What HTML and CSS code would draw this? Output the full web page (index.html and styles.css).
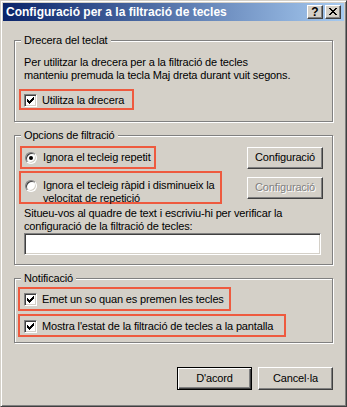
FILE: index.html
```html
<!DOCTYPE html>
<html lang="ca">
<head>
<meta charset="utf-8">
<title>Configuració per a la filtració de tecles</title>
<link rel="stylesheet" href="styles.css">
</head>
<body>
<div class="window">
  <div class="titlebar">
    <span class="title">Configuració per a la filtració de tecles</span>
    <div class="tbtns">
      <span class="tbtn help">?</span>
      <span class="tbtn close">
        <svg width="8" height="7" viewBox="0 0 8 7" shape-rendering="crispEdges">
          <rect x="0" y="0" width="2" height="1"/><rect x="6" y="0" width="2" height="1"/>
          <rect x="1" y="1" width="2" height="1"/><rect x="5" y="1" width="2" height="1"/>
          <rect x="2" y="2" width="4" height="1"/>
          <rect x="3" y="3" width="2" height="1"/>
          <rect x="2" y="4" width="4" height="1"/>
          <rect x="1" y="5" width="2" height="1"/><rect x="5" y="5" width="2" height="1"/>
          <rect x="0" y="6" width="2" height="1"/><rect x="6" y="6" width="2" height="1"/>
        </svg>
      </span>
    </div>
  </div>
  <div class="client">
    <div class="group g1">
      <span class="legend">Drecera del teclat</span>
      <p class="desc">Per utilitzar la drecera per a la filtració de tecles<br>manteniu premuda la tecla Maj dreta durant vuit segons.</p>
      <div class="mark m1">
        <span class="cb"><svg width="7" height="7" viewBox="0 0 7 7" shape-rendering="crispEdges"><rect x="6" y="0" width="1" height="1"/><rect x="5" y="1" width="2" height="1"/><rect x="0" y="2" width="1" height="1"/><rect x="4" y="2" width="3" height="1"/><rect x="0" y="3" width="2" height="1"/><rect x="3" y="3" width="3" height="1"/><rect x="0" y="4" width="5" height="1"/><rect x="1" y="5" width="3" height="1"/><rect x="2" y="6" width="1" height="1"/></svg></span>
        <span class="lbl">Utilitza la drecera</span>
      </div>
    </div>

    <div class="group g2">
      <span class="legend">Opcions de filtració</span>
      <div class="opts">
        <div class="mark rB">
          <span class="rd"><span class="dot"></span></span>
          <span class="lbl">Ignora el tecleig repetit</span>
        </div>
        <button class="btn cfg" type="button">Configuració</button>
        <div class="mark rC">
          <span class="rd"></span>
          <span class="lbl">Ignora el tecleig ràpid i disminueix la<br>velocitat de repetició</span>
        </div>
        <button class="btn cfg disabled" type="button">Configuració</button>
      </div>
      <p class="note">Situeu-vos al quadre de text i escriviu-hi per verificar la<br>configuració de la filtració de tecles:</p>
      <input class="field" type="text" aria-label="Prova">
    </div>

    <div class="group g3">
      <span class="legend">Notificació</span>
      <div class="mark rD">
        <span class="cb"><svg width="7" height="7" viewBox="0 0 7 7" shape-rendering="crispEdges"><rect x="6" y="0" width="1" height="1"/><rect x="5" y="1" width="2" height="1"/><rect x="0" y="2" width="1" height="1"/><rect x="4" y="2" width="3" height="1"/><rect x="0" y="3" width="2" height="1"/><rect x="3" y="3" width="3" height="1"/><rect x="0" y="4" width="5" height="1"/><rect x="1" y="5" width="3" height="1"/><rect x="2" y="6" width="1" height="1"/></svg></span>
        <span class="lbl">Emet un so quan es premen les tecles</span>
      </div>
      <div class="mark rE">
        <span class="cb"><svg width="7" height="7" viewBox="0 0 7 7" shape-rendering="crispEdges"><rect x="6" y="0" width="1" height="1"/><rect x="5" y="1" width="2" height="1"/><rect x="0" y="2" width="1" height="1"/><rect x="4" y="2" width="3" height="1"/><rect x="0" y="3" width="2" height="1"/><rect x="3" y="3" width="3" height="1"/><rect x="0" y="4" width="5" height="1"/><rect x="1" y="5" width="3" height="1"/><rect x="2" y="6" width="1" height="1"/></svg></span>
        <span class="lbl">Mostra l'estat de la filtració de tecles a la pantalla</span>
      </div>
    </div>

    <div class="footer">
      <button class="btn default" type="button">D'acord</button>
      <button class="btn" type="button">Cancel·la</button>
    </div>
  </div>
</div>
</body>
</html>
```
FILE: styles.css
```css
* { box-sizing: border-box; }
html, body { margin: 0; padding: 0; }
body {
  width: 347px;
  height: 407px;
  background: #d4d0c8;
  font-family: "Liberation Sans", Arial, sans-serif;
  font-size: 11px;
  line-height: 13px;
  letter-spacing: -0.15px;
  color: #000;
}
.window {
  width: 347px;
  height: 407px;
  background: #d4d0c8;
  border: 1px solid;
  border-color: #d4d0c8 #404040 #404040 #d4d0c8;
  box-shadow: inset 1px 1px #fff, inset -1px -1px #808080;
  padding: 2px;
  display: flex;
  flex-direction: column;
}
.titlebar {
  height: 18px;
  flex: none;
  display: flex;
  align-items: center;
  background: linear-gradient(to right, #0a246a, #a6caf0);
  padding: 0 3px 0 3px;
}
.title {
  flex: 1;
  color: #fff;
  font-weight: bold;
  font-size: 12px;
  line-height: 18px;
  letter-spacing: 0;
  white-space: nowrap;
}
.tbtns { display: flex; gap: 2px; }
.tbtn {
  width: 16px;
  height: 14px;
  background: #d4d0c8;
  border: 1px solid;
  border-color: #fff #404040 #404040 #fff;
  box-shadow: inset -1px -1px #808080;
  display: flex;
  align-items: center;
  justify-content: center;
}
.help {
  font-weight: bold;
  font-size: 12px;
  line-height: 12px;
  letter-spacing: 0;
  padding-bottom: 1px;
}
.close svg { display: block; fill: #000; margin-bottom: 1px; }

.client {
  flex: 1;
  padding: 0 11px;
  display: flex;
  flex-direction: column;
}
.group {
  border: 1px solid #808080;
  box-shadow: 1px 1px 0 #fff, inset 1px 1px 0 #fff;
  padding: 0 9px;
  display: flex;
  flex-direction: column;
  align-items: flex-start;
}
.g1 { margin-top: 19px; padding-bottom: 11px; }
.g2 { margin-top: 13px; padding-bottom: 9px; align-items: stretch; }
.g3 { margin-top: 13px; padding-bottom: 5px; }
.legend {
  display: block;
  margin: -7px 0 0 -3px;
  padding: 0 3px;
  background: #d4d0c8;
  line-height: 13px;
  white-space: nowrap;
  align-self: flex-start;
}
.desc { margin: 9px 0 0; white-space: nowrap; }
.note { margin: 3px 0 0; white-space: nowrap; }

.mark {
  display: flex;
  align-items: center;
  border: 2px solid #ee5a3f;
  gap: 5px;
}
.lbl { white-space: nowrap; }
.m1 { width: 115px; height: 21px; margin: 7px 0 0 -5px; padding: 1px 0 0 3px; }
.rB { width: 136px; height: 23px; margin-left: -4px; padding-left: 3px; gap: 6px; }
.rC { width: 203px; height: 33px; margin-left: -5px; padding: 6px 0 0 4px; align-items: flex-start; gap: 6px; }
.rD { width: 213px; height: 24px; margin: 2px 0 0 -6px; padding: 1px 0 0 4px; }
.rE { width: 268px; height: 23px; margin: 3px 0 0 -6px; padding: 1px 0 0 4px; }

.cb {
  width: 13px;
  height: 13px;
  flex: none;
  background: #fff;
  border: 1px solid;
  border-color: #808080 #fff #fff #808080;
  box-shadow: inset 1px 1px #404040, inset -1px -1px #d4d0c8;
  display: flex;
  align-items: center;
  justify-content: center;
}
.cb svg { display: block; fill: #000; }
.rd {
  width: 12px;
  height: 12px;
  flex: none;
  border-radius: 50%;
  background: #fff;
  border: 1px solid;
  border-color: #808080 #fff #fff #808080;
  box-shadow: inset 1px 1px #404040, inset -1px -1px #d4d0c8;
  display: flex;
  align-items: center;
  justify-content: center;
}
.rC .rd { margin-top: 1px; }
.dot { width: 4px; height: 4px; border-radius: 50%; background: #000; }

.opts {
  display: grid;
  grid-template-columns: 1fr 76px;
  row-gap: 2px;
  align-items: center;
  margin-top: 4px;
}
.btn {
  width: 75px;
  height: 23px;
  padding: 0;
  margin: 0;
  background: #d4d0c8;
  border: 1px solid;
  border-color: #fff #404040 #404040 #fff;
  box-shadow: inset -1px -1px #808080;
  font: inherit;
  letter-spacing: inherit;
  color: #000;
  display: flex;
  align-items: center;
  justify-content: center;
}
.cfg { width: 76px; height: 22px; }
.disabled { color: #808080; text-shadow: 1px 1px 0 #fff; }
.default {
  border: 1px solid #000;
  box-shadow: inset 1px 1px #fff, inset -1px -1px #404040, inset -2px -2px #808080;
}
.field {
  display: block;
  width: 297px;
  height: 22px;
  margin: 0;
  padding: 0;
  background: #fff;
  border: 1px solid;
  border-color: #808080 #fff #fff #808080;
  box-shadow: inset 1px 1px #404040, inset -1px -1px #d4d0c8;
  outline: none;
}
.footer {
  display: flex;
  justify-content: flex-end;
  gap: 6px;
  margin-top: 24px;
}
```
